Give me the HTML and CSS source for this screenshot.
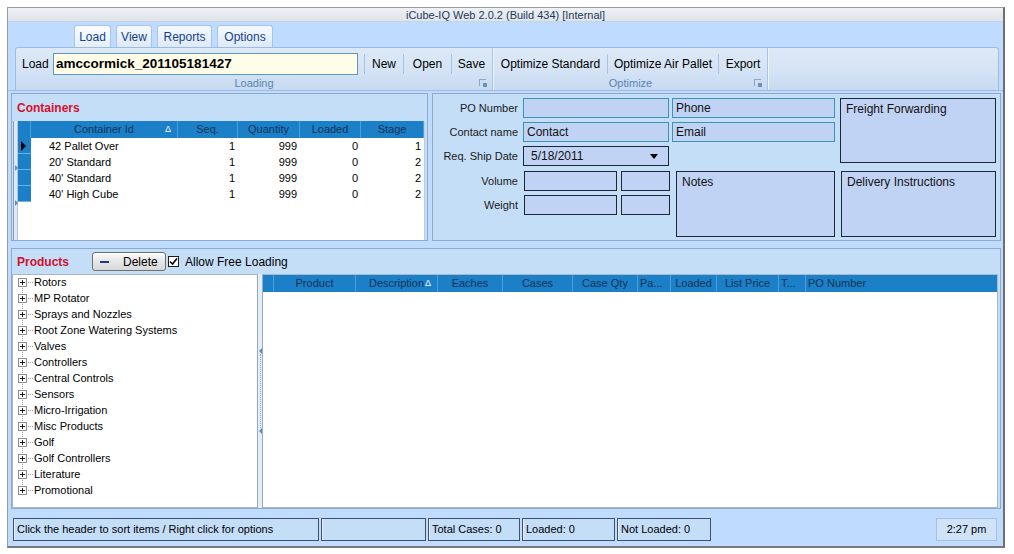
FILE: index.html
```html
<!DOCTYPE html>
<html>
<head>
<meta charset="utf-8">
<title>iCube-IQ Web</title>
<link rel="stylesheet" href="styles.css">
</head>
<body>
<div class="window">
  <div class="titlebar">iCube-IQ Web 2.0.2 (Build 434) [Internal]</div>
  <div class="tabband">
    <div class="tab active">Load</div>
    <div class="tab">View</div>
    <div class="tab">Reports</div>
    <div class="tab">Options</div>
  </div>
  <div class="ribbon">
    <div class="group g-loading">
      <div class="group-body">
        <span class="lbl">Load</span>
        <div class="loadinput">amccormick_201105181427</div>
        <div class="rbtns">
          <div class="rbtn b-new">New</div>
          <div class="rbtn b-open">Open</div>
          <div class="rbtn b-save">Save</div>
        </div>
      </div>
      <div class="group-label">Loading<span class="launcher"></span></div>
    </div>
    <div class="group g-opt">
      <div class="group-body">
        <div class="rbtns">
          <div class="rbtn b-os">Optimize Standard</div>
          <div class="rbtn b-oa">Optimize Air Pallet</div>
          <div class="rbtn b-ex">Export</div>
        </div>
      </div>
      <div class="group-label">Optimize<span class="launcher"></span></div>
    </div>
  </div>

  <div class="content">
    <div class="toprow">
      <div class="panel containers">
        <div class="panel-head"><span class="ptitle">Containers</span></div>
        <div class="cgrid-wrap">
          <div class="edge-strip"><span class="arr a1"></span><span class="arr a2"></span></div>
          <div class="cgrid">
            <div class="ghead crow">
              <div class="sel"></div>
              <div class="c-id">Container Id<span class="sort">&#916;</span></div>
              <div class="c-seq">Seq.</div>
              <div class="c-qty">Quantity</div>
              <div class="c-ld">Loaded</div>
              <div class="c-st">Stage</div>
            </div>
            <div class="crow data">
              <div class="sel cur"><span class="rowarrow"></span></div>
              <div class="c-id">42 Pallet Over</div>
              <div class="c-seq num">1</div>
              <div class="c-qty num">999</div>
              <div class="c-ld num">0</div>
              <div class="c-st num">1</div>
            </div>
            <div class="crow data">
              <div class="sel"></div>
              <div class="c-id">20' Standard</div>
              <div class="c-seq num">1</div>
              <div class="c-qty num">999</div>
              <div class="c-ld num">0</div>
              <div class="c-st num">2</div>
            </div>
            <div class="crow data">
              <div class="sel"></div>
              <div class="c-id">40' Standard</div>
              <div class="c-seq num">1</div>
              <div class="c-qty num">999</div>
              <div class="c-ld num">0</div>
              <div class="c-st num">2</div>
            </div>
            <div class="crow data">
              <div class="sel"></div>
              <div class="c-id">40' High Cube</div>
              <div class="c-seq num">1</div>
              <div class="c-qty num">999</div>
              <div class="c-ld num">0</div>
              <div class="c-st num">2</div>
            </div>
          </div>
        </div>
      </div>

      <div class="panel form">
        <div class="fgrid">
          <label class="flabel r1">PO Number</label>
          <div class="fin teal r1 cA"></div>
          <div class="fin teal r1 cB">Phone</div>
          <div class="fin dark freight">Freight Forwarding</div>

          <label class="flabel r2">Contact name</label>
          <div class="fin teal r2 cA">Contact</div>
          <div class="fin teal r2 cB">Email</div>

          <label class="flabel r3">Req. Ship Date</label>
          <div class="fin dark r3 cA dropdown"><span>5/18/2011</span><span class="ddarrow"></span></div>

          <label class="flabel r4">Volume</label>
          <div class="pair r4 cA"><div class="fin dark wide"></div><div class="fin dark narrow"></div></div>
          <div class="fin dark notes">Notes</div>
          <div class="fin dark delivery">Delivery Instructions</div>

          <label class="flabel r5">Weight</label>
          <div class="pair r5 cA"><div class="fin dark wide"></div><div class="fin dark narrow"></div></div>
        </div>
      </div>
    </div>

    <div class="hsplit"></div>

    <div class="panel products">
      <div class="prod-head">
        <span class="ptitle">Products</span>
        <button class="delbtn"><span class="minus"></span>Delete</button>
        <span class="chk"><svg width="9" height="9" viewBox="0 0 9 9"><path d="M1 4.5 L3.5 7 L8 1.5" fill="none" stroke="#000" stroke-width="1.6"/></svg></span>
        <span class="chklabel">Allow Free Loading</span>
      </div>
      <div class="prod-body">
        <ul class="tree">
          <li><span class="pbox"></span>Rotors</li>
          <li><span class="pbox"></span>MP Rotator</li>
          <li><span class="pbox"></span>Sprays and Nozzles</li>
          <li><span class="pbox"></span>Root Zone Watering Systems</li>
          <li><span class="pbox"></span>Valves</li>
          <li><span class="pbox"></span>Controllers</li>
          <li><span class="pbox"></span>Central Controls</li>
          <li><span class="pbox"></span>Sensors</li>
          <li><span class="pbox"></span>Micro-Irrigation</li>
          <li><span class="pbox"></span>Misc Products</li>
          <li><span class="pbox"></span>Golf</li>
          <li><span class="pbox"></span>Golf Controllers</li>
          <li><span class="pbox"></span>Literature</li>
          <li><span class="pbox"></span>Promotional</li>
        </ul>
        <div class="vsplit"><span class="larr l1"></span><span class="vdots"></span><span class="larr l2"></span></div>
        <div class="pgrid">
          <div class="ghead prow">
            <div class="p-sel"></div>
            <div class="p-prod">Product</div>
            <div class="p-desc">Description<span class="sort">&#916;</span></div>
            <div class="p-each">Eaches</div>
            <div class="p-cases">Cases</div>
            <div class="p-cq">Case Qty</div>
            <div class="p-pa left">Pa...</div>
            <div class="p-ld">Loaded</div>
            <div class="p-lp">List Price</div>
            <div class="p-t left">T...</div>
            <div class="p-po left">PO Number</div>
          </div>
        </div>
      </div>
    </div>
  </div>

  <div class="statusbar">
    <div class="sp s1">Click the header to sort items / Right click for options</div>
    <div class="sp s2"></div>
    <div class="sp s3">Total Cases: 0</div>
    <div class="sp s4">Loaded: 0</div>
    <div class="sp s5">Not Loaded: 0</div>
    <div class="sfill"></div>
    <div class="sp time">2:27 pm</div>
  </div>
</div>
</body>
</html>
```

FILE: styles.css
```css
* { box-sizing: border-box; }
html, body { margin: 0; padding: 0; background: #ffffff; }
body {
  font-family: "Liberation Sans", Arial, sans-serif;
  font-size: 11px;
  color: #000;
}

.window {
  margin: 7px 0 0 7px;
  width: 998px;
  height: 541px;
  border: 1px solid #9a9a9a;
  border-right: 2px solid #6f6f6f;
  border-bottom: 2px solid #7a7a7a;
  background: #bfdbff;
  display: flex;
  flex-direction: column;
}

/* title */
.titlebar {
  height: 14px;
  line-height: 14px;
  text-align: center;
  background: linear-gradient(#eef1f5, #dfe4ea);
  color: #1e395b;
  font-size: 11px;
  border-bottom: 1px solid #c9d4e2;
}

/* tabs */
.tabband {
  height: 25px;
  display: flex;
  align-items: flex-end;
  gap: 5px;
  padding-left: 66px;
  background: #bfdbff;
}
.tab {
  height: 22px;
  line-height: 22px;
  text-align: center;
  font-size: 12px;
  color: #15428b;
  border: 1px solid #a8c4e6;
  border-bottom: none;
  border-radius: 3px 3px 0 0;
  background: linear-gradient(#f6f9fd, #dde9f8);
}
.tab:nth-child(1) { width: 37px; }
.tab:nth-child(2) { width: 36px; }
.tab:nth-child(3) { width: 55px; }
.tab:nth-child(4) { width: 56px; }
.tab.active { background: linear-gradient(#fbfdff, #e4eefa); }

/* ribbon */
.ribbon {
  height: 43px;
  margin: 0 4px 0 7px;
  display: flex;
  border: 1px solid #9dbcdf;
  border-bottom: none;
  border-radius: 3px 3px 0 0;
  background: linear-gradient(#dde9f7 0%, #d3e2f4 60%, #c7daf1 100%);
}
.group {
  flex: none;
  display: flex;
  flex-direction: column;
  border-right: 1px solid #aac3e0;
  box-shadow: 1px 0 0 #eef4fc;
}
.g-loading { width: 477px; }
.g-opt { width: 274px; margin-left: 1px; }
.group-body {
  height: 28px;
  display: flex;
  align-items: center;
  padding: 3px 0 0 0;
}
.group-label {
  flex: 1;
  position: relative;
  text-align: center;
  color: #5a82b4;
  font-size: 11px;
  line-height: 14px;
}
.launcher {
  position: absolute;
  right: 6px;
  top: 3px;
  width: 7px;
  height: 7px;
  border-left: 1px solid #8aa6c8;
  border-top: 1px solid #8aa6c8;
}
.launcher::after {
  content: "";
  position: absolute;
  right: -1px;
  bottom: -1px;
  width: 4px;
  height: 4px;
  background: #6f8fb5;
}
.lbl {
  flex: none;
  width: 37px;
  font-size: 12px;
  padding: 0 0 0 6px;
  color: #000;
}
.loadinput {
  flex: none;
  width: 305px;
  height: 22px;
  line-height: 20px;
  padding-left: 2px;
  border: 1px solid #5a98bd;
  background: #fffde8;
  font-weight: bold;
  font-size: 13.5px;
  color: #000;
  white-space: nowrap;
}
.rbtns { display: flex; align-items: center; margin-left: 6px; flex: none; }
.g-opt .rbtns { margin-left: 0; }
.rbtn {
  flex: none;
  height: 20px;
  line-height: 20px;
  font-size: 12px;
  text-align: center;
  white-space: nowrap;
  border-left: 1px solid #aac3e0;
}
.b-new { width: 39px; }
.b-open { width: 48px; }
.b-save { width: 40px; }
.b-os { width: 113px; border-left: none; }
.b-oa { width: 111px; }
.b-ex { width: 49px; }

/* content */
.content {
  flex: 1;
  display: flex;
  flex-direction: column;
  padding: 2px 2px 0 3px;
  border-top: 1px solid #9dbcdf;
}
.toprow {
  height: 148px;
  display: flex;
  gap: 4px;
}
.panel {
  border: 1px solid #8eaacb;
  background: #c5def8;
}
.containers { width: 417px; display: flex; flex-direction: column; }
.panel-head { height: 27px; padding: 7px 0 0 5px; }
.ptitle {
  color: #d1102c;
  font-weight: bold;
  font-size: 12px;
}
.cgrid-wrap {
  flex: 1;
  display: flex;
  margin-left: 1px;
}
.edge-strip {
  width: 5px;
  position: relative;
  background: #dfe9f5;
  border-left: 1px solid #8e9bab;
  border-right: 1px solid #b8c4d2;
}
.arr {
  position: absolute;
  left: 1px;
  width: 0; height: 0;
  border-top: 3px solid transparent;
  border-bottom: 3px solid transparent;
  border-left: 3px solid #5c8cc4;
}
.a1 { top: 44px; }
.a2 { top: 79px; }
.cgrid {
  flex: 1;
  background: #ffffff;
  margin-right: 2px;
  border-right: 1px solid #c0ccd8;
}
.crow { display: flex; height: 16px; line-height: 16px; }
.ghead {
  height: 17px;
  line-height: 17px;
  background: #1b80c8;
  color: #143257;
  font-size: 11px;
}
.ghead > div {
  text-align: center;
  border-right: 1px solid #4aa0dc;
  white-space: nowrap;
  overflow: hidden;
  position: relative;
}
.ghead > div.left { text-align: left; padding-left: 2px; }
.sel { width: 13px; flex: none; }
.crow.data .sel {
  background: #1b80c8;
  border-bottom: 1px solid #6eb2e2;
  position: relative;
}
.rowarrow {
  position: absolute;
  left: 3px; top: 3px;
  border-top: 5px solid transparent;
  border-bottom: 5px solid transparent;
  border-left: 5px solid #000;
}
.c-id { width: 147px; }
.c-seq { width: 60px; }
.c-qty { width: 62px; }
.c-ld { width: 61px; }
.c-st { flex: 1; }
.crow.data .c-id { padding-left: 18px; }
.num { text-align: right; padding-right: 3px; }
.sort {
  position: absolute;
  right: 6px;
  top: 0;
  color: #eef5fd;
  font-size: 9px;
}

/* form */
.form { flex: 1; padding: 4px 0 0 3px; }
.fgrid {
  display: grid;
  grid-template-columns: 87px 149px 168px 156px;
  grid-template-rows: 20px 20px 21px 20px 20px 17px;
  row-gap: 4px;
}
.flabel {
  font-size: 11px;
  color: #1a1a1a;
  text-align: right;
  padding-right: 5px;
  line-height: 20px;
  grid-column: 1;
}
.r1 { grid-row: 1; }
.r2 { grid-row: 2; }
.r3 { grid-row: 3; }
.r4 { grid-row: 4; }
.r5 { grid-row: 5; }
.cA { grid-column: 2; }
.cB { grid-column: 3; }
.fin {
  background: #c1d3f5;
  font-size: 12px;
  line-height: 18px;
  padding-left: 3px;
  color: #111;
}
.teal { border: 1px solid #3b94b3; }
.dark { border: 1px solid #1c2836; }
.r1.cA, .r2.cA { width: 146px; }
.r1.cB, .r2.cB { width: 163px; }
.freight {
  grid-column: 4;
  grid-row: 1 / 4;
  height: 65px;
  padding: 1px 5px;
}
.dropdown {
  width: 146px;
  height: 20px;
  display: flex;
  justify-content: space-between;
  align-items: center;
  padding: 0 10px 0 7px;
}
.ddarrow {
  width: 0; height: 0;
  border-left: 4px solid transparent;
  border-right: 4px solid transparent;
  border-top: 5px solid #000;
}
.pair { display: flex; gap: 4px; padding-left: 1px; }
.pair .wide { width: 93px; }
.pair .narrow { width: 49px; }
.notes {
  grid-column: 3;
  grid-row: 4 / 7;
  margin-left: 4px;
  width: 159px;
  height: 66px;
  padding: 1px 5px;
}
.delivery {
  grid-column: 4;
  grid-row: 4 / 7;
  margin-left: 1px;
  width: 155px;
  height: 66px;
  padding: 1px 5px;
}

/* splitter between top & bottom */
.hsplit { height: 7px; }

/* products */
.products {
  height: 261px;
  display: flex;
  flex-direction: column;
}
.prod-head {
  height: 25px;
  display: flex;
  align-items: center;
  padding-left: 5px;
}
.delbtn {
  margin-left: 23px;
  width: 74px;
  height: 19px;
  border: 1px solid #707070;
  border-radius: 3px;
  background: linear-gradient(#fbfbfb, #e6e6e6 50%, #d8d8d8);
  font-family: "Liberation Sans", Arial, sans-serif;
  font-size: 12px;
  color: #000;
  display: flex;
  align-items: center;
  padding: 0 0 0 7px;
}
.minus {
  display: inline-block;
  width: 9px;
  height: 2px;
  background: #1a3a8c;
  margin-right: 14px;
}
.chk {
  width: 11px;
  height: 11px;
  margin-left: 2px;
  border: 1px solid #1c1c1c;
  background: #fff;
  display: flex;
  align-items: center;
  justify-content: center;
}
.chklabel { font-size: 12px; margin-left: 6px; }
.prod-body {
  flex: 1;
  display: flex;
  padding: 0 1px 0 0;
}
.tree {
  width: 245px;
  margin: 0;
  padding: 0 0 0 5px;
  list-style: none;
  background: #fff;
  border: 1px solid #a8b8c8;
  border-right: none;
  position: relative;
}
.tree::before {
  content: "";
  position: absolute;
  left: 9px;
  top: 4px;
  bottom: 18px;
  border-left: 1px dotted #9a9a9a;
}
.tree li {
  height: 16px;
  line-height: 14px;
  font-size: 11px;
  display: flex;
  align-items: flex-start;
  padding-top: 0;
  position: relative;
}
.pbox {
  flex: none;
  width: 9px;
  height: 9px;
  margin-top: 3px;
  border: 1px solid #8e8e8e;
  background: #fff;
  position: relative;
  margin-right: 7px;
  z-index: 1;
}
.pbox::before {
  content: "";
  position: absolute;
  left: 1px; top: 3px;
  width: 5px; height: 1px;
  background: #1f1f1f;
}
.pbox::after {
  content: "";
  position: absolute;
  left: 3px; top: 1px;
  width: 1px; height: 5px;
  background: #1f1f1f;
}
.tree li::after {
  content: "";
  position: absolute;
  left: 10px;
  top: 7px;
  width: 5px;
  border-top: 1px dotted #9a9a9a;
}
.vsplit {
  width: 6px;
  display: flex;
  flex-direction: column;
  align-items: center;
  padding-top: 74px;
  background: #e3edf8;
  border-left: 1px solid #9aaabd;
  border-right: 1px solid #9aaabd;
}
.larr {
  width: 0; height: 0;
  border-top: 3px solid transparent;
  border-bottom: 3px solid transparent;
  border-right: 3px solid #5c8cc4;
}
.vdots {
  height: 74px;
  border-left: 1px dotted #8aa8cc;
}
.pgrid {
  flex: 1;
  background: #fff;
  border: 1px solid #a8b8c8;
  border-left: none;
  margin-right: 1px;
}
.prow { display: flex; }
.p-sel { width: 11px; flex: none; }
.p-prod { width: 82px; }
.p-desc { width: 82px; }
.p-each { width: 65px; }
.p-cases { width: 70px; }
.p-cq { width: 65px; }
.p-pa { width: 33px; }
.p-ld { width: 46px; }
.p-lp { width: 62px; }
.p-t { width: 27px; }
.p-po { flex: 1; border-right: none !important; }

/* status bar */
.statusbar {
  height: 34px;
  display: flex;
  align-items: center;
  gap: 2px;
  padding: 0 6px 0 5px;
}
.sp {
  height: 23px;
  line-height: 21px;
  border: 1px solid #3e5166;
  box-shadow: inset 1px 0 0 #e8f1fb;
  background: #c5def8;
  padding-left: 3px;
  font-size: 11px;
  white-space: nowrap;
}
.s1 { width: 306px; }
.s2 { width: 105px; }
.s3 { width: 92px; }
.s4 { width: 93px; }
.s5 { width: 94px; }
.sfill { flex: 1; }
.time {
  width: 61px;
  border: 1px solid #a9c0da;
  box-shadow: none;
  background: #cfe2f7;
  text-align: center;
  padding-left: 0;
}
```
